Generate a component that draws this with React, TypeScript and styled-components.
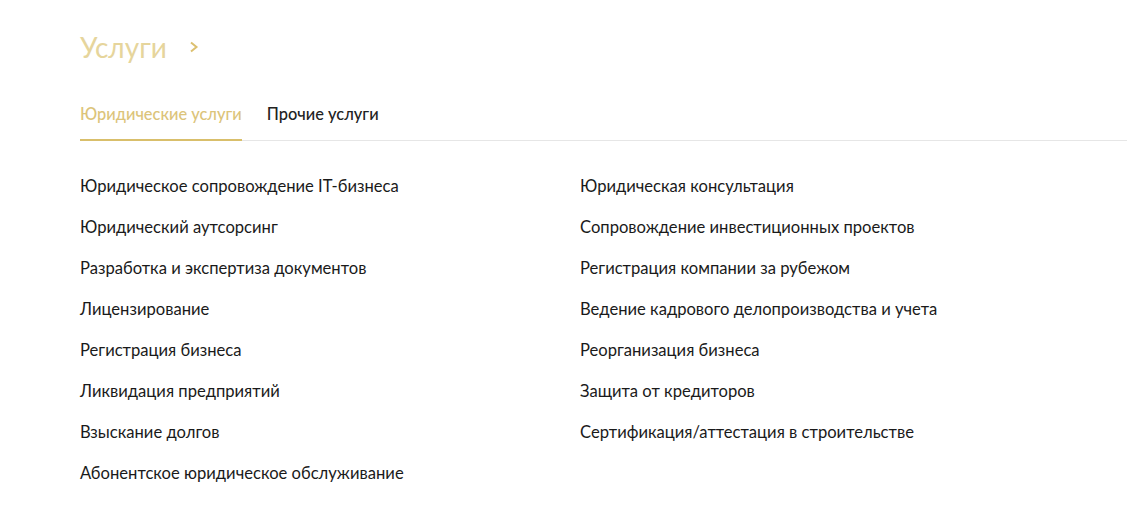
import { useState } from "react";
import styled, { createGlobalStyle } from "styled-components";

const GlobalStyle = createGlobalStyle`
  body {
    margin: 0;
    background: #fff;
    font-family: Lato, "Noto Sans", sans-serif;
  }
`;

const Page = styled.section`
  padding: 29px 0 0 80px;
`;

const Title = styled.h2`
  display: flex;
  align-items: center;
  gap: 22px;
  margin: 0;
  font-size: 28px;
  font-weight: 400;
  color: #e6d59c;
  height: 36px;
`;

const Tabs = styled.div`
  display: flex;
  gap: 25px;
  margin-top: 39px;
  border-bottom: 1px solid #e6e6e6;
`;

const Tab = styled.button<{ $active?: boolean }>`
  background: none;
  border: 0;
  padding: 0 0 16px;
  margin-bottom: -1px;
  font-family: inherit;
  font-size: 16.4px;
  font-weight: 500;
  color: ${(p) => (p.$active ? "#dcc47a" : "#222")};
  border-bottom: 2px solid ${(p) => (p.$active ? "#d9bf6b" : "transparent")};
  cursor: pointer;
`;

const Grid = styled.ul`
  display: grid;
  grid-template-columns: 500px 500px;
  grid-auto-flow: column;
  grid-template-rows: repeat(8, 41px);
  list-style: none;
  margin: 25px 0 0;
  padding: 0;
`;

const Item = styled.li`
  font-size: 16.6px;
  line-height: 41px;
  color: #1a1a1a;
`;

const left = [
  "Юридическое сопровождение IT-бизнеса",
  "Юридический аутсорсинг",
  "Разработка и экспертиза документов",
  "Лицензирование",
  "Регистрация бизнеса",
  "Ликвидация предприятий",
  "Взыскание долгов",
  "Абонентское юридическое обслуживание",
];

const right = [
  "Юридическая консультация",
  "Сопровождение инвестиционных проектов",
  "Регистрация компании за рубежом",
  "Ведение кадрового делопроизводства и учета",
  "Реорганизация бизнеса",
  "Защита от кредиторов",
  "Сертификация/аттестация в строительстве",
];

export default function App() {
  const [tab, setTab] = useState(0);
  return (
    <>
      <GlobalStyle />
      <Page>
        <Title>
          Услуги
          <svg width="10" height="12" viewBox="0 0 10 12">
            <path d="M2 1.5 L7.5 6 L2 10.5" fill="none" stroke="#dcc070" strokeWidth="2" />
          </svg>
        </Title>
        <Tabs>
          <Tab $active={tab === 0} onClick={() => setTab(0)}>Юридические услуги</Tab>
          <Tab $active={tab === 1} onClick={() => setTab(1)}>Прочие услуги</Tab>
        </Tabs>
        <Grid>
          {left.map((t) => (
            <Item key={t}>{t}</Item>
          ))}
          {right.map((t) => (
            <Item key={t}>{t}</Item>
          ))}
        </Grid>
      </Page>
    </>
  );
}
